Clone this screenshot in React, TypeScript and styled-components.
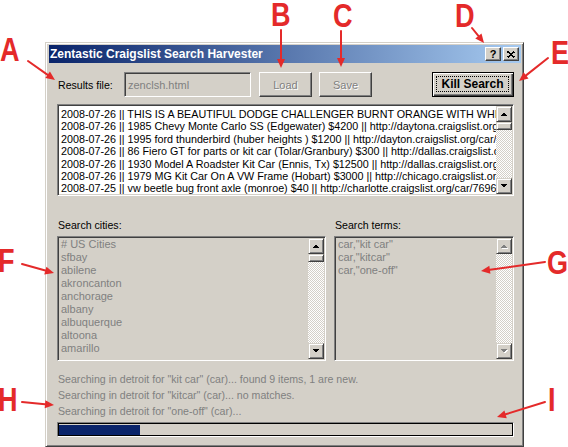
import React from "react";
import styled, { createGlobalStyle, css } from "styled-components";

const FACE = "#D4D0C8";
const SHADOW = "#808080";
const DARK = "#404040";
const RED = "#E42A2A";
const UI_SIZE = "10.6px";

const GlobalStyle = createGlobalStyle`
  html, body { margin: 0; padding: 0; background: #fff; }
  body {
    font-family: "Liberation Sans", Arial, sans-serif;
    font-size: ${UI_SIZE};
    color: #000;
  }
  #root { width: 568px; height: 447px; overflow: hidden; }
  * { box-sizing: border-box; }
`;

const frameBevel = css`
  border: 1px solid;
  border-color: ${FACE} ${DARK} ${DARK} ${FACE};
  box-shadow: inset 1px 1px #fff, inset -1px -1px ${SHADOW};
`;

const buttonBevel = css`
  border: 1px solid;
  border-color: #fff ${DARK} ${DARK} #fff;
  box-shadow: inset -1px -1px ${SHADOW};
`;

const sunken = css`
  border: 1px solid;
  border-color: ${SHADOW} #fff #fff ${SHADOW};
  box-shadow: inset 1px 1px ${DARK}, inset -1px -1px ${FACE};
`;

const Stage = styled.div`
  position: relative;
  width: 568px;
  height: 447px;
  padding: 42px 0 0 45px;
  overflow: hidden;
`;

const Window = styled.div`
  width: 479px;
  height: 405px;
  background: ${FACE};
  ${frameBevel};
  padding: 2px 2px 2px 3px;
  display: flex;
  flex-direction: column;
`;

const TitleBar = styled.div`
  height: 18px;
  display: flex;
  align-items: center;
  padding: 0 2px 0 1px;
  background: linear-gradient(to right, #0a246a, #a6caf0);
`;

const TitleText = styled.span`
  flex: 1;
  color: #fff;
  font-weight: bold;
  font-size: 12px;
  white-space: nowrap;
`;

const TitleButton = styled.div`
  width: 16px;
  height: 14px;
  background: ${FACE};
  ${buttonBevel};
  display: flex;
  align-items: center;
  justify-content: center;
  font-weight: bold;
  font-size: 11px;
  line-height: 1;
  & + & {
    margin-left: 2px;
  }
`;

const Client = styled.div`
  flex: 1;
  display: flex;
  flex-direction: column;
  padding: 0 7px 0 8px;
`;

const TopRow = styled.div`
  display: flex;
  align-items: center;
  height: 25px;
  margin-top: 9px;
`;

const FieldLabel = styled.span`
  width: 67px;
  padding-left: 1px;
  white-space: nowrap;
`;

const TextInput = styled.div`
  width: 127px;
  height: 25px;
  ${sunken};
  background: ${FACE};
  color: ${SHADOW};
  font-size: 11px;
  display: flex;
  align-items: center;
  padding-left: 3px;
`;

const PushButton = styled.div<{ $width: number; $gap: number; $disabled?: boolean }>`
  width: ${(p) => p.$width}px;
  height: 25px;
  margin-left: ${(p) => p.$gap}px;
  background: ${FACE};
  ${buttonBevel};
  display: flex;
  align-items: center;
  justify-content: center;
  font-size: 11px;
  color: ${(p) => (p.$disabled ? SHADOW : "#000")};
  text-shadow: ${(p) => (p.$disabled ? "1px 1px #fff" : "none")};
`;

const DefaultButton = styled.div`
  width: 82px;
  height: 25px;
  margin-left: auto;
  background: ${FACE};
  border: 1px solid #000;
  box-shadow: inset 1px 1px #fff, inset -1px -1px ${DARK}, inset -2px -2px ${SHADOW};
  padding: 3px 4px 4px 3px;
  display: flex;
`;

const FocusRing = styled.div`
  flex: 1;
  border: 1px dotted #000;
  display: flex;
  align-items: center;
  justify-content: center;
  font-weight: bold;
  font-size: 12px;
  white-space: nowrap;
`;

const LogBox = styled.div`
  margin-top: 7px;
  height: 92px;
  ${sunken};
  background: #fff;
  padding: 1px;
  display: flex;
`;

const LogText = styled.div`
  flex: 1;
  min-width: 0;
  overflow: hidden;
  padding: 2px 0 0 2px;
  font-size: 10.75px;
  line-height: 12.4px;
  white-space: nowrap;
`;

const SectionLabels = styled.div`
  margin-top: 23px;
  display: grid;
  grid-template-columns: 269px 1fr;
  column-gap: 8px;
  height: 13px;
  line-height: 13px;
`;

const SectionLabel = styled.span`
  padding-left: 1px;
`;

const ListsRow = styled.div`
  margin-top: 4px;
  display: grid;
  grid-template-columns: 269px 1fr;
  column-gap: 8px;
  height: 125px;
`;

const ListBox = styled.div<{ $disabled?: boolean }>`
  ${sunken};
  background: ${(p) => (p.$disabled ? FACE : "#fff")};
  padding: 1px;
  display: flex;
  min-width: 0;
`;

const ListText = styled.div`
  flex: 1;
  min-width: 0;
  overflow: hidden;
  padding: 0 0 0 2px;
  font-size: 11px;
  line-height: 13px;
  color: ${SHADOW};
  white-space: nowrap;
`;

const ScrollBar = styled.div`
  width: 16px;
  flex-shrink: 0;
  display: flex;
  flex-direction: column;
`;

const ArrowButton = styled.div`
  width: 16px;
  height: 16px;
  flex-shrink: 0;
  background: ${FACE};
  ${frameBevel};
  display: flex;
  align-items: center;
  justify-content: center;
`;

const Thumb = styled.div`
  width: 16px;
  height: 8px;
  flex-shrink: 0;
  background: ${FACE};
  ${frameBevel};
`;

const Track = styled.div`
  flex: 1;
  background: repeating-conic-gradient(#ffffff 0 25%, ${FACE} 0 50%) 0 0 / 2px 2px;
`;

const StatusArea = styled.div`
  margin-top: 10px;
  display: flex;
  flex-direction: column;
`;

const StatusLine = styled.div`
  height: 16px;
  line-height: 16px;
  padding-left: 1px;
  color: ${SHADOW};
  white-space: nowrap;
`;

const Progress = styled.div`
  margin-top: 3px;
  height: 15px;
  border: 1px solid;
  border-color: ${SHADOW} #fff #fff ${SHADOW};
  box-shadow: inset 1px 1px #000, inset -1px -1px #000;
  padding: 2px 1px 1px 1px;
  display: flex;
`;

const ProgressFill = styled.div`
  height: 10px;
  background: #0a246a;
`;

const Overlay = styled.svg`
  position: absolute;
  left: 0;
  top: 0;
  width: 568px;
  height: 447px;
  pointer-events: none;
`;

const Marker = styled.span<{ $x: number; $y: number }>`
  position: absolute;
  left: ${(p) => p.$x}px;
  top: ${(p) => p.$y}px;
  font-family: "Liberation Sans", Arial, sans-serif;
  font-weight: bold;
  font-size: 33px;
  line-height: 33px;
  color: ${RED};
  transform: scaleX(0.82);
  transform-origin: left top;
  pointer-events: none;
`;

const Arrow: React.FC<{ a: [number, number, number, number] }> = ({ a }) => {
  const [x1, y1, x2, y2] = a;
  const ang = Math.atan2(y2 - y1, x2 - x1);
  const L = 9;
  const W = 4;
  const bx = x2 - L * Math.cos(ang);
  const by = y2 - L * Math.sin(ang);
  const px = -Math.sin(ang) * W;
  const py = Math.cos(ang) * W;
  return (
    <g>
      <line x1={x1} y1={y1} x2={bx} y2={by} stroke={RED} strokeWidth={2} strokeLinecap="round" />
      <polygon points={`${x2},${y2} ${bx + px},${by + py} ${bx - px},${by - py}`} fill={RED} />
    </g>
  );
};

const TriUp: React.FC<{ disabled?: boolean }> = ({ disabled }) => (
  <svg width="8" height="5" viewBox="0 0 8 5" shapeRendering="crispEdges">
    {disabled && <polygon points="1,5 4.5,1.5 8,5" fill="#fff" />}
    <polygon points="0,4 3.5,0.5 7,4" fill={disabled ? SHADOW : "#000"} />
  </svg>
);

const TriDown: React.FC<{ disabled?: boolean }> = ({ disabled }) => (
  <svg width="8" height="5" viewBox="0 0 8 5" shapeRendering="crispEdges">
    {disabled && <polygon points="1,1 8,1 4.5,4.5" fill="#fff" />}
    <polygon points="0,0 7,0 3.5,3.5" fill={disabled ? SHADOW : "#000"} />
  </svg>
);

const CloseGlyph = () => (
  <svg width="8" height="7" viewBox="0 0 8 7" shapeRendering="crispEdges">
    <path d="M0.5 0.5 L7.5 6.5 M7.5 0.5 L0.5 6.5" stroke="#000" strokeWidth="1.6" />
  </svg>
);

const logLines = [
  "2008-07-26 || THIS IS A BEAUTIFUL DODGE CHALLENGER BURNT ORANGE WITH WHITE STRIPES",
  "2008-07-26 || 1985 Chevy Monte Carlo SS (Edgewater) $4200 || http://daytona.craigslist.org/car/",
  "2008-07-26 || 1995 ford thunderbird  (huber heights ) $1200 || http://dayton.craigslist.org/car/",
  "2008-07-26 || 86 Fiero GT for parts or kit car (Tolar/Granbury) $300 || http://dallas.craigslist.org/",
  "2008-07-26 || 1930 Model A Roadster Kit Car (Ennis, Tx) $12500 || http://dallas.craigslist.org/",
  "2008-07-26 || 1979 MG Kit Car On A VW Frame (Hobart) $3000 || http://chicago.craigslist.org/",
  "2008-07-25 || vw beetle bug front axle (monroe) $40 || http://charlotte.craigslist.org/car/7696",
];

const cities = [
  "# US Cities",
  "sfbay",
  "abilene",
  "akroncanton",
  "anchorage",
  "albany",
  "albuquerque",
  "altoona",
  "amarillo",
];

const terms = ['car,"kit car"', 'car,"kitcar"', 'car,"one-off"'];

const statusLines = [
  'Searching in detroit for "kit car" (car)... found 9 items, 1 are new.',
  'Searching in detroit for "kitcar" (car)... no matches.',
  'Searching in detroit for "one-off" (car)...',
];

const markers: { t: string; x: number; y: number }[] = [
  { t: "A", x: 0, y: 33 },
  { t: "B", x: 271, y: -2 },
  { t: "C", x: 333, y: -1 },
  { t: "D", x: 455, y: -1 },
  { t: "E", x: 551, y: 36 },
  { t: "F", x: -2, y: 244 },
  { t: "G", x: 547, y: 246 },
  { t: "H", x: -2, y: 383 },
  { t: "I", x: 548, y: 383 },
];

const arrows: [number, number, number, number][] = [
  [28, 61, 55, 80],
  [281, 30, 281, 68],
  [341, 31, 341, 67],
  [472, 28, 484, 43],
  [548, 58, 519, 81],
  [22, 264, 54, 273],
  [545, 262, 481, 271],
  [22, 402, 54, 405],
  [545, 402, 497, 417],
];

const progressValue = 17.8;

export default function App() {
  return (
    <>
      <GlobalStyle />
      <Stage>
        <Window>
          <TitleBar>
            <TitleText>Zentastic Craigslist Search Harvester</TitleText>
            <TitleButton>?</TitleButton>
            <TitleButton>
              <CloseGlyph />
            </TitleButton>
          </TitleBar>
          <Client>
            <TopRow>
              <FieldLabel>Results file:</FieldLabel>
              <TextInput>zenclsh.html</TextInput>
              <PushButton $width={53} $gap={8} $disabled>
                Load
              </PushButton>
              <PushButton $width={53} $gap={7} $disabled>
                Save
              </PushButton>
              <DefaultButton>
                <FocusRing>Kill Search</FocusRing>
              </DefaultButton>
            </TopRow>

            <LogBox>
              <LogText>
                {logLines.map((l, i) => (
                  <div key={i}>{l}</div>
                ))}
              </LogText>
              <ScrollBar>
                <ArrowButton>
                  <TriUp />
                </ArrowButton>
                <Thumb />
                <Track />
                <ArrowButton>
                  <TriDown />
                </ArrowButton>
              </ScrollBar>
            </LogBox>

            <SectionLabels>
              <SectionLabel>Search cities:</SectionLabel>
              <SectionLabel>Search terms:</SectionLabel>
            </SectionLabels>

            <ListsRow>
              <ListBox $disabled>
                <ListText>
                  {cities.map((c) => (
                    <div key={c}>{c}</div>
                  ))}
                </ListText>
                <ScrollBar>
                  <ArrowButton>
                    <TriUp />
                  </ArrowButton>
                  <Thumb />
                  <Track />
                  <ArrowButton>
                    <TriDown />
                  </ArrowButton>
                </ScrollBar>
              </ListBox>
              <ListBox $disabled>
                <ListText>
                  {terms.map((c) => (
                    <div key={c}>{c}</div>
                  ))}
                </ListText>
                <ScrollBar>
                  <ArrowButton>
                    <TriUp disabled />
                  </ArrowButton>
                  <Track />
                  <ArrowButton>
                    <TriDown disabled />
                  </ArrowButton>
                </ScrollBar>
              </ListBox>
            </ListsRow>

            <StatusArea>
              {statusLines.map((s, i) => (
                <StatusLine key={i}>{s}</StatusLine>
              ))}
            </StatusArea>

            <Progress>
              <ProgressFill style={{ width: `${progressValue}%` }} />
            </Progress>
          </Client>
        </Window>

        <Overlay viewBox="0 0 568 447">
          {arrows.map((a, i) => (
            <Arrow key={i} a={a} />
          ))}
        </Overlay>
        {markers.map((m) => (
          <Marker key={m.t} $x={m.x} $y={m.y}>
            {m.t}
          </Marker>
        ))}
      </Stage>
    </>
  );
}
